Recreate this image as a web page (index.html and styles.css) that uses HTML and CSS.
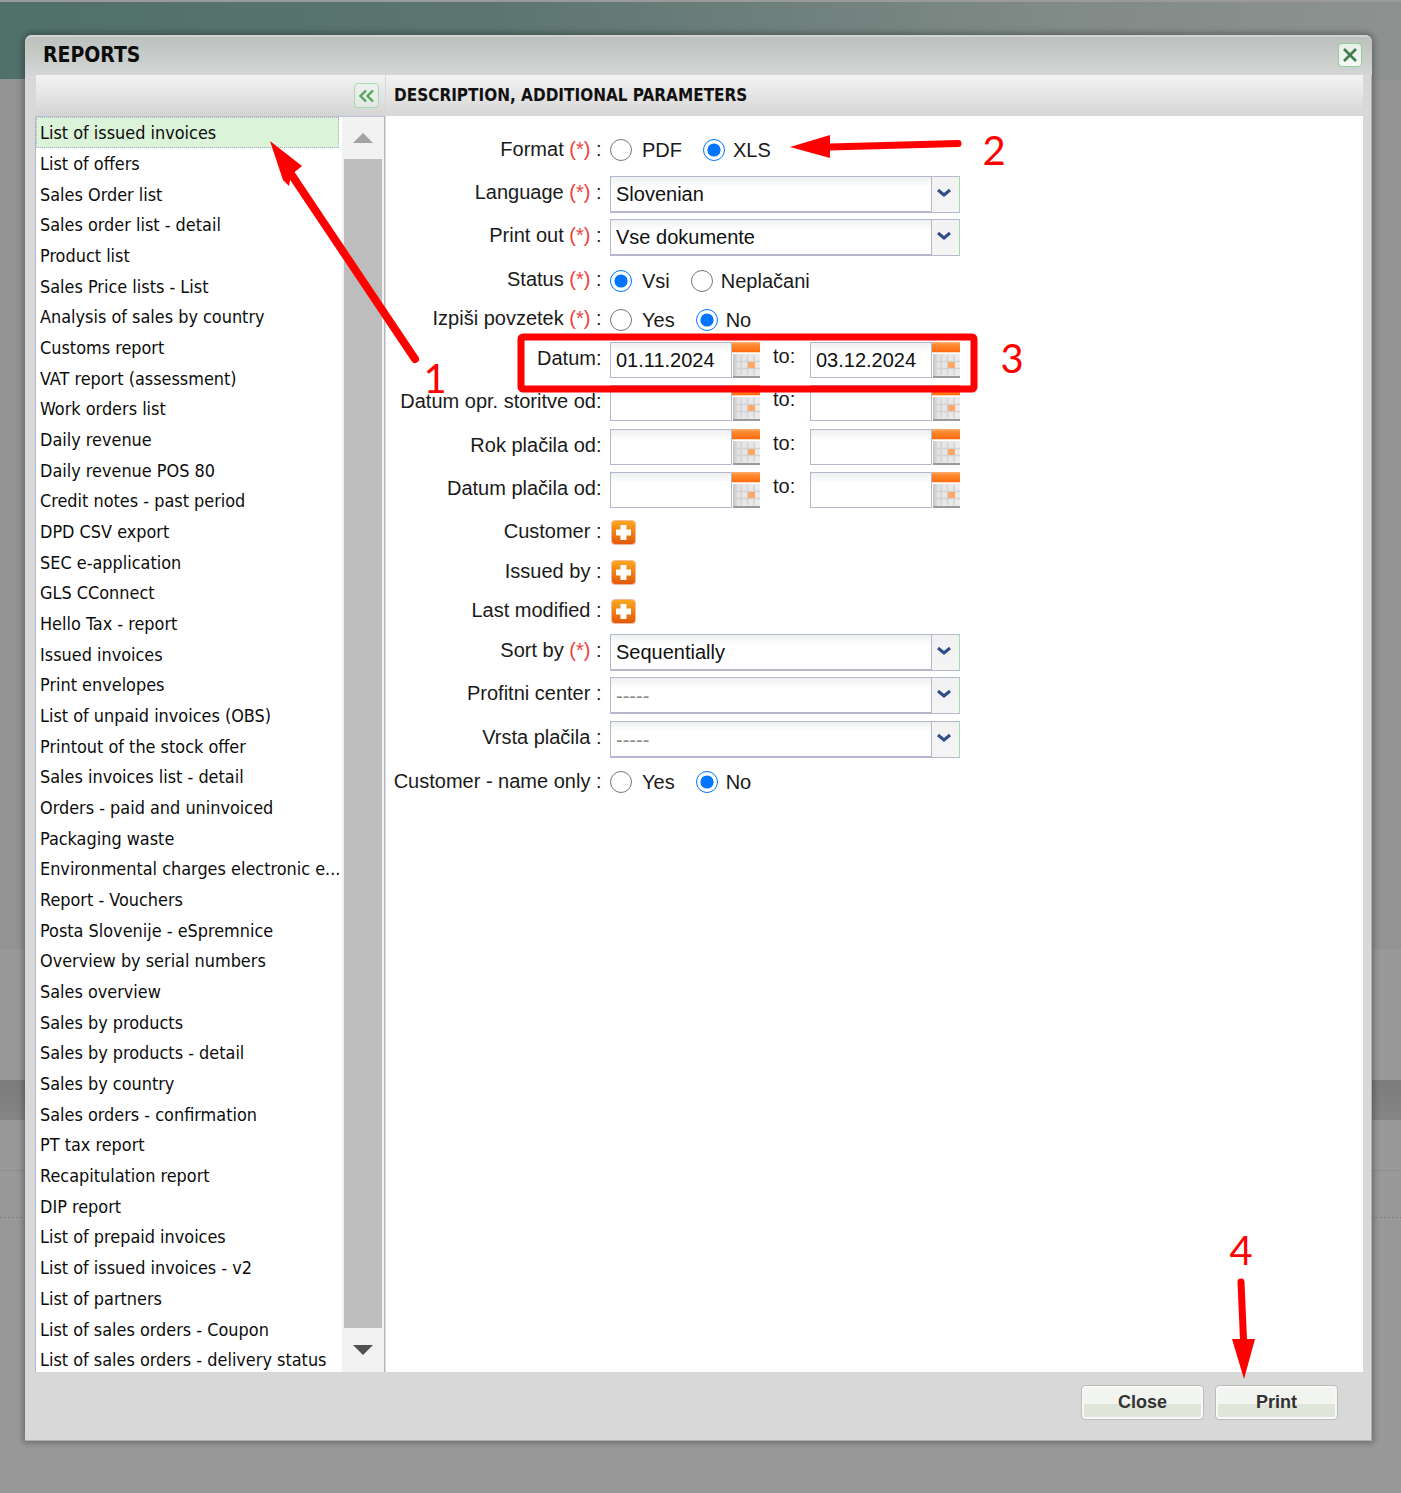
FILE: index.html
```html
<!DOCTYPE html>
<html lang="en">
<head>
<meta charset="utf-8">
<title>Reports</title>
<link rel="stylesheet" href="styles.css">
</head>
<body>
<svg class="defs" width="0" height="0" aria-hidden="true">
  <defs>
    <linearGradient id="calTop" x1="0" y1="0" x2="0" y2="1"><stop offset="0" stop-color="#ffb070"/><stop offset=".3" stop-color="#ff8a30"/><stop offset="1" stop-color="#ff6c10"/></linearGradient>
    <linearGradient id="calBody" x1="0" y1="0" x2="1" y2="0"><stop offset="0" stop-color="#c4c4c4"/><stop offset=".2" stop-color="#e4e4e4"/><stop offset="1" stop-color="#ececec"/></linearGradient>
    <linearGradient id="plusBg" x1="0" y1="0" x2="0" y2="1"><stop offset="0" stop-color="#fba91e"/><stop offset="1" stop-color="#e2580a"/></linearGradient>
    <symbol id="cal" viewBox="0 0 28 36">
      <rect x="0" y="0" width="28" height="10" fill="url(#calTop)"/>
      <rect x="0" y="10" width="28" height="1" fill="#ffd9bd"/>
      <rect x="0" y="11" width="28" height="1" fill="#fff"/>
      <rect x="1" y="12" width="27" height="22" fill="url(#calBody)"/>
      <path d="M9 13v20M15.500 13v20M22 13v20M2 19.500h26M2 26.500h26" stroke="#d2d2d2" stroke-width="1.500" fill="none"/>
      <rect x="16" y="20" width="7" height="6" fill="#ffa768"/>
      <rect x="1" y="34" width="27" height="2" fill="#9a9a9a"/>
    </symbol>
    <symbol id="plus" viewBox="0 0 25 25">
      <rect x=".5" y=".5" width="24" height="24" rx="3.5" fill="url(#plusBg)" stroke="#f6b9a0"/>
      <path d="M9.5 5h6v4.500h4.500v6h-4.500v4.500h-6v-4.500h-4.500v-6h4.500z" fill="#fff"/>
    </symbol>
    <symbol id="chev" viewBox="0 0 16 10">
      <path d="M2 2l6 5 6-5" fill="none" stroke="#2f4d8c" stroke-width="3"/>
    </symbol>
  </defs>
</svg>

<div class="backdrop">
  <div class="bd-top"></div>
  <div class="bd-a"></div>
  <div class="bd-b"></div>
  <div class="bd-c"></div>
  <div class="bd-d"></div>
  <div class="bd-e"></div>
</div>

<section class="modal">
  <header class="title-bar">
    <h1 class="title">REPORTS</h1>
    <button class="close-x" type="button" aria-label="Close">
      <svg width="18" height="18" viewBox="0 0 18 18"><path d="M3 3l12 12M15 3L3 15" stroke="#3f7d4a" stroke-width="2.600" fill="none"/></svg>
    </button>
  </header>

  <div class="body">
    <aside class="side">
      <div class="side-head">
        <button class="collapse" type="button" aria-label="Collapse">
          <svg width="18" height="14" viewBox="0 0 18 14"><path d="M8 1.500L2.500 7 8 12.500M15 1.500L9.500 7l5.500 5.500" stroke="#55a65c" stroke-width="2.400" fill="none"/></svg>
        </button>
      </div>
      <div class="side-main">
        <ul class="list">
          <li class="item selected">List of issued invoices</li>
          <li class="item">List of offers</li>
          <li class="item">Sales Order list</li>
          <li class="item">Sales order list - detail</li>
          <li class="item">Product list</li>
          <li class="item">Sales Price lists - List</li>
          <li class="item">Analysis of sales by country</li>
          <li class="item">Customs report</li>
          <li class="item">VAT report (assessment)</li>
          <li class="item">Work orders list</li>
          <li class="item">Daily revenue</li>
          <li class="item">Daily revenue POS 80</li>
          <li class="item">Credit notes - past period</li>
          <li class="item">DPD CSV export</li>
          <li class="item">SEC e-application</li>
          <li class="item">GLS CConnect</li>
          <li class="item">Hello Tax - report</li>
          <li class="item">Issued invoices</li>
          <li class="item">Print envelopes</li>
          <li class="item">List of unpaid invoices (OBS)</li>
          <li class="item">Printout of the stock offer</li>
          <li class="item">Sales invoices list - detail</li>
          <li class="item">Orders - paid and uninvoiced</li>
          <li class="item">Packaging waste</li>
          <li class="item">Environmental charges electronic e...</li>
          <li class="item">Report - Vouchers</li>
          <li class="item">Posta Slovenije - eSpremnice</li>
          <li class="item">Overview by serial numbers</li>
          <li class="item">Sales overview</li>
          <li class="item">Sales by products</li>
          <li class="item">Sales by products - detail</li>
          <li class="item">Sales by country</li>
          <li class="item">Sales orders - confirmation</li>
          <li class="item">PT tax report</li>
          <li class="item">Recapitulation report</li>
          <li class="item">DIP report</li>
          <li class="item">List of prepaid invoices</li>
          <li class="item">List of issued invoices - v2</li>
          <li class="item">List of partners</li>
          <li class="item">List of sales orders - Coupon</li>
          <li class="item">List of sales orders - delivery status</li>
        </ul>
        <div class="scrollbar">
          <div class="sb-btn"><span class="tri-up"></span></div>
          <div class="sb-thumb"></div>
          <div class="sb-btn sb-btn-down"><span class="tri-down"></span></div>
        </div>
      </div>
    </aside>

    <main class="panel">
      <div class="panel-head">DESCRIPTION, ADDITIONAL PARAMETERS</div>
      <form class="form">
        <div class="row h44">
          <span class="label low">Format <em>(*)</em> :</span>
          <div class="radios">
            <label class="radio"><input type="radio" name="fmt">PDF</label>
            <label class="radio"><input type="radio" name="fmt" checked>XLS</label>
          </div>
        </div>
        <div class="row h43">
          <span class="label">Language <em>(*)</em> :</span>
          <div class="select"><span class="sel-text">Slovenian</span><span class="sel-btn"><svg width="16" height="10"><use href="#chev"/></svg></span></div>
        </div>
        <div class="row h44">
          <span class="label">Print out <em>(*)</em> :</span>
          <div class="select"><span class="sel-text">Vse dokumente</span><span class="sel-btn"><svg width="16" height="10"><use href="#chev"/></svg></span></div>
        </div>
        <div class="row h39">
          <span class="label">Status <em>(*)</em> :</span>
          <div class="radios">
            <label class="radio"><input type="radio" name="st" checked>Vsi</label>
            <label class="radio"><input type="radio" name="st">Neplačani</label>
          </div>
        </div>
        <div class="row h39">
          <span class="label">Izpiši povzetek <em>(*)</em> :</span>
          <div class="radios">
            <label class="radio"><input type="radio" name="sm">Yes</label>
            <label class="radio"><input type="radio" name="sm" checked>No</label>
          </div>
        </div>
        <div class="row h43">
          <span class="label low">Datum:</span>
          <div class="dates">
            <div class="date"><span class="date-input">01.11.2024</span><svg class="cal" width="28" height="36"><use href="#cal"/></svg></div>
            <span class="to">to:</span>
            <div class="date"><span class="date-input">03.12.2024</span><svg class="cal" width="28" height="36"><use href="#cal"/></svg></div>
          </div>
        </div>
        <div class="row h44">
          <span class="label low">Datum opr. storitve od:</span>
          <div class="dates">
            <div class="date"><span class="date-input"></span><svg class="cal" width="28" height="36"><use href="#cal"/></svg></div>
            <span class="to">to:</span>
            <div class="date"><span class="date-input"></span><svg class="cal" width="28" height="36"><use href="#cal"/></svg></div>
          </div>
        </div>
        <div class="row h43">
          <span class="label low">Rok plačila od:</span>
          <div class="dates">
            <div class="date"><span class="date-input"></span><svg class="cal" width="28" height="36"><use href="#cal"/></svg></div>
            <span class="to">to:</span>
            <div class="date"><span class="date-input"></span><svg class="cal" width="28" height="36"><use href="#cal"/></svg></div>
          </div>
        </div>
        <div class="row h44">
          <span class="label low">Datum plačila od:</span>
          <div class="dates">
            <div class="date"><span class="date-input"></span><svg class="cal" width="28" height="36"><use href="#cal"/></svg></div>
            <span class="to">to:</span>
            <div class="date"><span class="date-input"></span><svg class="cal" width="28" height="36"><use href="#cal"/></svg></div>
          </div>
        </div>
        <div class="row h40">
          <span class="label">Customer :</span>
          <svg class="plus" width="25" height="25"><use href="#plus"/></svg>
        </div>
        <div class="row h39">
          <span class="label">Issued by :</span>
          <svg class="plus" width="25" height="25"><use href="#plus"/></svg>
        </div>
        <div class="row h40">
          <span class="label">Last modified :</span>
          <svg class="plus" width="25" height="25"><use href="#plus"/></svg>
        </div>
        <div class="row h43">
          <span class="label">Sort by <em>(*)</em> :</span>
          <div class="select"><span class="sel-text">Sequentially</span><span class="sel-btn"><svg width="16" height="10"><use href="#chev"/></svg></span></div>
        </div>
        <div class="row h44">
          <span class="label">Profitni center :</span>
          <div class="select"><span class="sel-text muted">-----</span><span class="sel-btn"><svg width="16" height="10"><use href="#chev"/></svg></span></div>
        </div>
        <div class="row h43">
          <span class="label">Vrsta plačila :</span>
          <div class="select"><span class="sel-text muted">-----</span><span class="sel-btn"><svg width="16" height="10"><use href="#chev"/></svg></span></div>
        </div>
        <div class="row h39">
          <span class="label low">Customer - name only :</span>
          <div class="radios">
            <label class="radio"><input type="radio" name="cn">Yes</label>
            <label class="radio"><input type="radio" name="cn" checked>No</label>
          </div>
        </div>
      </form>
    </main>
  </div>

  <footer class="foot">
    <button class="btn" type="button">Close</button>
    <button class="btn" type="button">Print</button>
  </footer>
</section>

<svg class="marks" width="1401" height="1493" viewBox="0 0 1401 1493" aria-hidden="true">
  <g fill="#ff0000" stroke="none">
    <path d="M270 141L302 166L291 175L289 186L283 180z"/>
    <path d="M958 143.500L830 147" stroke="#ff0000" stroke-width="7" stroke-linecap="round"/>
    <path d="M790 147L830 135V158z"/>
    <path d="M1241 1282L1243.500 1340" stroke="#ff0000" stroke-width="7" stroke-linecap="round"/>
    <path d="M1232 1339H1255L1244 1379z"/>
  </g>
  <path class="mk-line" d="M415 359L285 165"/>
  <rect class="mk-box" x="521" y="337" width="453" height="52" rx="2"/>
  <text class="mk-num" x="435" y="393" text-anchor="middle">1</text>
  <text class="mk-num" x="994" y="165" text-anchor="middle">2</text>
  <text class="mk-num" x="1012" y="373" text-anchor="middle">3</text>
  <text class="mk-num" x="1241" y="1265" text-anchor="middle">4</text>
</svg>
</body>
</html>
```

FILE: styles.css
```css
* { box-sizing: border-box; }
html, body { margin: 0; padding: 0; }
body {
  width: 1401px;
  height: 1493px;
  position: relative;
  overflow: hidden;
  background: #999999;
  font-family: "Liberation Sans", Arial, sans-serif;
  color: #111;
}
.defs { position: absolute; }

/* dimmed page behind the dialog */
.backdrop { display: flex; flex-direction: column; height: 100%; }
.bd-top {
  height: 79px;
  border-top: 2px solid #9a9a9a;
  background: linear-gradient(90deg, #50706a 0%, #5c7570 35%, #808a87 75%, #8d9290 100%);
}
.bd-a { height: 870px; background: #939393; }
.bd-b { height: 131px; background: #999999; }
.bd-c { height: 40px; background: linear-gradient(#7c7c7c, #858585); }
.bd-d { height: 51px; background: #999999; border-bottom: 1px solid #8e8e8e; }
.bd-e { flex: 1; background: #999999; background-image: repeating-linear-gradient(90deg, #808080 0 2px, transparent 2px 4px); background-size: 100% 1px; background-repeat: no-repeat; background-position: 0 46px; }

/* dialog */
.modal {
  position: absolute;
  left: 25px;
  top: 35px;
  width: 1347px;
  height: 1406px;
  display: flex;
  flex-direction: column;
  background: #d8d8d8;
  border-radius: 7px 7px 0 0;
  box-shadow: 0 0 6px 2px rgba(0, 0, 0, .3), inset -1px -1px 0 #b0b0b0;
}
.title-bar {
  height: 40px;
  flex: none;
  display: flex;
  align-items: center;
  justify-content: space-between;
  padding: 0 10px 3px 18px;
  border-radius: 7px 7px 0 0;
  border-top: 2px solid #d2d4d2;
  background: linear-gradient(#bdc1be, #d3d6d4);
}
.title {
  margin: 1px 0 0;
  font: 700 21px "DejaVu Sans Condensed", "DejaVu Sans", sans-serif;
  font-stretch: condensed;
  color: #0c0c0c;
}
.close-x {
  width: 24px;
  height: 24px;
  padding: 0;
  display: flex;
  align-items: center;
  justify-content: center;
  border: 1px solid #8fd09a;
  border-radius: 4px;
  background: linear-gradient(#e9eeea, #f6f8f6);
}
.body {
  flex: 1;
  min-height: 0;
  display: flex;
  padding: 0 9px 0 11px;
}
.side {
  width: 349px;
  flex: none;
  display: flex;
  flex-direction: column;
}
.side-head {
  height: 42px;
  flex: none;
  display: flex;
  align-items: center;
  justify-content: flex-end;
  padding-right: 6px;
  background: linear-gradient(#f3f3f3, #d4d4d4);
  border-bottom: 1px solid #c0c2d2;
}
.collapse {
  width: 25px;
  height: 25px;
  padding: 0;
  display: flex;
  align-items: center;
  justify-content: center;
  border: 1px solid #a7dcae;
  border-radius: 4px;
  background: linear-gradient(#eef1ee, #e4e8e4);
}
.side-main {
  flex: 1;
  min-height: 0;
  display: flex;
  margin-left: -1px;
  background: #fff;
  border-left: 1px solid #b4b7cc;
  border-right: 1px solid #b4b7cc;
  overflow: hidden;
}
.list {
  list-style: none;
  margin: 0;
  padding: .3px 0 0;
  width: 303px;
  flex: none;
  font-family: "DejaVu Sans Condensed", "DejaVu Sans", sans-serif;
  font-stretch: condensed;
  font-size: 17.900px;
}
.item {
  height: 30.680px;
  line-height: 31px;
  padding: 0 0 0 4px;
  white-space: nowrap;
  color: #0c0c0c;
}
.selected {
  background: #daf3d9;
  outline: 1px dotted #9fb0c8;
  outline-offset: -1px;
}
.scrollbar {
  flex: 1;
  display: flex;
  flex-direction: column;
  background: #f1f1f1;
  padding: 0 2px;
  margin-left: 3px;
}
.sb-btn { height: 42px; flex: none; display: flex; align-items: center; justify-content: center; }
.sb-btn-down { height: 44px; }
.sb-thumb { flex: 1; background: #bdbdbd; }
.tri-up { width: 0; height: 0; border: 10px solid transparent; border-top: 0; border-bottom: 10px solid #a3a3a3; }
.tri-down { width: 0; height: 0; border: 10px solid transparent; border-bottom: 0; border-top: 10px solid #505050; }

.panel {
  flex: 1;
  min-width: 0;
  display: flex;
  flex-direction: column;
  margin-left: 1px;
  background: #fff;
}
.panel-head {
  height: 41px;
  flex: none;
  padding-left: 8px;
  font: 700 17px/40px "DejaVu Sans Condensed", "DejaVu Sans", sans-serif;
  font-stretch: condensed;
  color: #111;
  background: linear-gradient(#f3f3f3, #d6d6d6);
}

/* form */
.form { display: flex; flex-direction: column; padding-top: 16px; }
.row { display: flex; align-items: flex-start; gap: 8.500px; }
.h39 { height: 39px; }
.h40 { height: 40px; }
.h43 { height: 43.500px; }
.h44 { height: 43.500px; }
.label {
  width: 215.500px;
  flex: none;
  text-align: right;
  white-space: nowrap;
  font-size: 20px;
  line-height: 32px;
  color: #1a1a1a;
}
.low { line-height: 34px; }
.label em { font-style: normal; color: #f0413c; }
.radios { display: flex; align-items: center; gap: 21px; height: 36px; }
.radio { display: flex; align-items: center; gap: 10px; font-size: 20px; color: #1a1a1a; line-height: 38px; }
.radio + .radio { gap: 8px; }
.radio input { width: 22px; height: 22px; margin: 0; }
.select { width: 350px; height: 37px; display: flex; }
.sel-text {
  width: 322px;
  padding-left: 5px;
  border: 1px solid #b5b8cd;
  border-bottom-width: 2px;
  background: linear-gradient(#eef0f0, #fff 30%);
  font-size: 20px;
  line-height: 34px;
  color: #111;
}
.muted { color: #888; line-height: 36px; }
.sel-btn {
  width: 28px;
  display: flex;
  align-items: flex-start;
  justify-content: center;
  padding: 11px 4px 0 0;
  background: linear-gradient(#f2f2f2, #f5f5f5);
  border-top: 1px solid #b5b8cd;
  border-bottom: 1px solid #b5b8cd;
  border-right: 1px solid #9fdcae;
}
.dates { display: flex; align-items: flex-start; height: 36px; margin-top: 1px; }
.date { display: flex; width: 150px; height: 36px; }
.date-input {
  width: 122px;
  height: 36px;
  padding-left: 5px;
  border: 1px solid #b5b8cd;
  background: linear-gradient(#eef0f0, #fff 30%);
  font-size: 20px;
  line-height: 35px;
  color: #111;
}
.cal { flex: none; display: block; }
.to { width: 50px; padding-left: 13px; font-size: 20px; line-height: 28px; color: #1a1a1a; }
.plus { display: block; margin: 5.500px 0 0 .5px; }

/* footer */
.foot {
  height: 69px;
  flex: none;
  display: flex;
  justify-content: flex-end;
  gap: 11px;
  padding: 13px 34px 0 0;
}
.btn {
  width: 123px;
  height: 35px;
  padding: 0;
  border: 1px solid #bcbcbc;
  box-shadow: inset 0 0 0 2px #f8f8f8;
  border-radius: 4px;
  background: linear-gradient(#f2f4f0 0 55%, #dfe5d8 55%);
  font: 700 18px "Liberation Sans", sans-serif;
  letter-spacing: 0;
  color: #333;
}

/* annotations drawn over the screenshot */
.marks { position: absolute; left: 0; top: 0; pointer-events: none; }
.mk-line { stroke: #ff0000; stroke-width: 8; stroke-linecap: round; fill: none; }
.mk-box { fill: none; stroke: #ff0000; stroke-width: 7; }
.mk-num { font: 400 40px "Lato", sans-serif; fill: #ff0000; }
```
